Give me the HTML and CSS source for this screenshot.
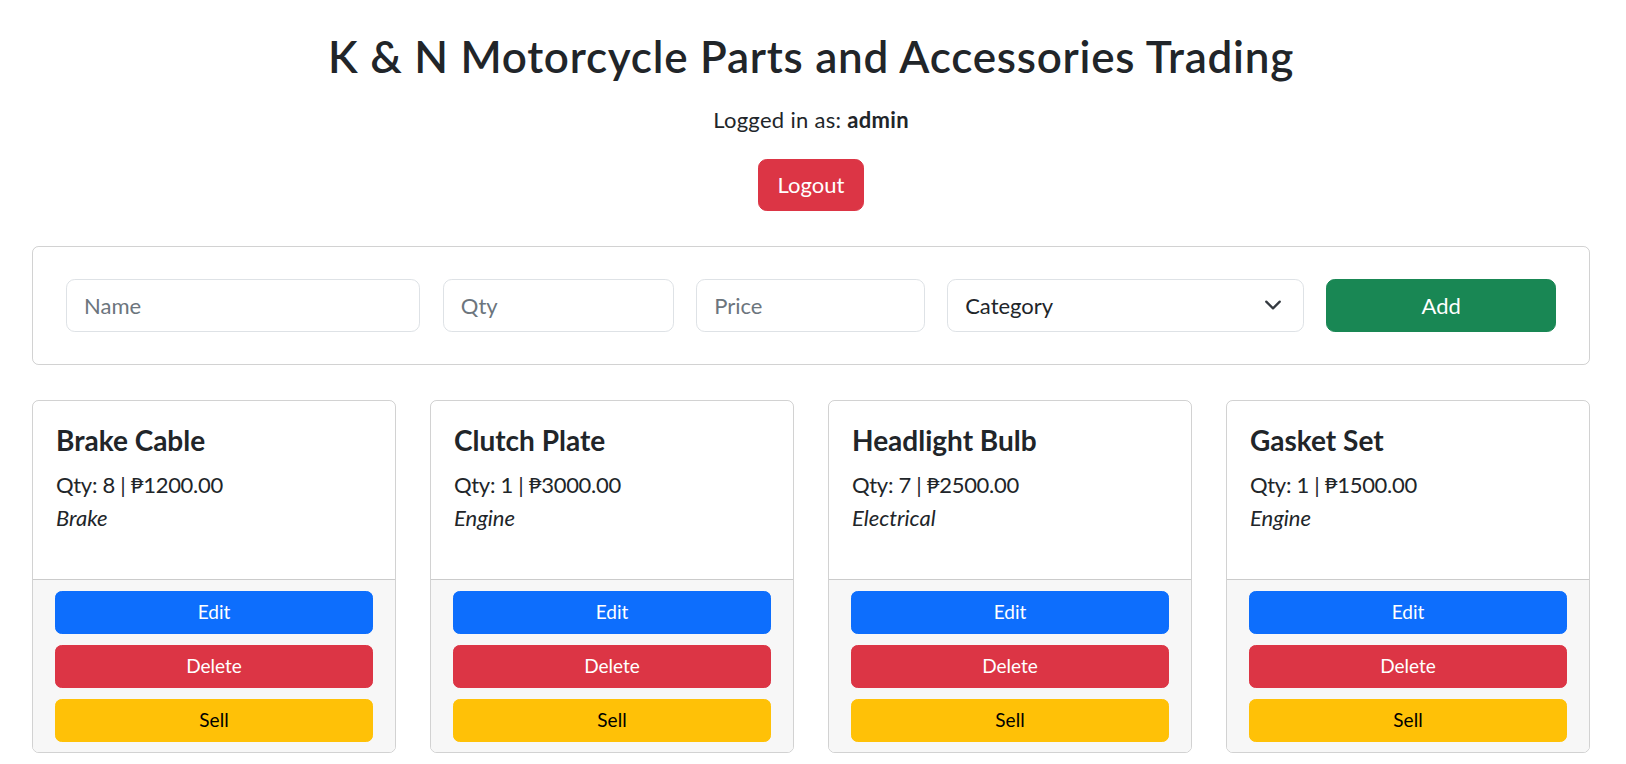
FILE: index.html
```html
<!DOCTYPE html>
<html lang="en">
<head>
<meta charset="utf-8">
<title>K &amp; N Motorcycle Parts and Accessories Trading</title>
<link rel="stylesheet" href="styles.css">
</head>
<body>
<div class="page">
  <header class="head">
    <h1 class="title">K &amp; N Motorcycle Parts and Accessories Trading</h1>
    <p class="user">Logged in as: <strong>admin</strong></p>
    <button class="btn btn-lg btn-danger">Logout</button>
  </header>

  <section class="form-card">
    <div class="form-row">
      <input class="field" type="text" placeholder="Name">
      <input class="field" type="text" placeholder="Qty">
      <input class="field" type="text" placeholder="Price">
      <div class="field select">
        <span>Category</span>
        <svg class="chev" viewBox="0 0 16 16" width="18" height="18"><path d="m2 5 6 6 6-6" fill="none" stroke="#343a40" stroke-width="2" stroke-linecap="round" stroke-linejoin="round"/></svg>
      </div>
      <button class="btn btn-lg btn-success">Add</button>
    </div>
  </section>

  <section class="items">
    <article class="item">
      <div class="item-body">
        <h4 class="item-title">Brake Cable</h4>
        <p class="item-text">Qty: 8 | ₱1200.00<br><em>Brake</em></p>
      </div>
      <div class="item-foot">
        <button class="btn btn-primary">Edit</button>
        <button class="btn btn-danger">Delete</button>
        <button class="btn btn-warning">Sell</button>
      </div>
    </article>
    <article class="item">
      <div class="item-body">
        <h4 class="item-title">Clutch Plate</h4>
        <p class="item-text">Qty: 1 | ₱3000.00<br><em>Engine</em></p>
      </div>
      <div class="item-foot">
        <button class="btn btn-primary">Edit</button>
        <button class="btn btn-danger">Delete</button>
        <button class="btn btn-warning">Sell</button>
      </div>
    </article>
    <article class="item">
      <div class="item-body">
        <h4 class="item-title">Headlight Bulb</h4>
        <p class="item-text">Qty: 7 | ₱2500.00<br><em>Electrical</em></p>
      </div>
      <div class="item-foot">
        <button class="btn btn-primary">Edit</button>
        <button class="btn btn-danger">Delete</button>
        <button class="btn btn-warning">Sell</button>
      </div>
    </article>
    <article class="item">
      <div class="item-body">
        <h4 class="item-title">Gasket Set</h4>
        <p class="item-text">Qty: 1 | ₱1500.00<br><em>Engine</em></p>
      </div>
      <div class="item-foot">
        <button class="btn btn-primary">Edit</button>
        <button class="btn btn-danger">Delete</button>
        <button class="btn btn-warning">Sell</button>
      </div>
    </article>
  </section>
</div>
</body>
</html>
```
FILE: styles.css
```css
* { box-sizing: border-box; }
html, body { margin: 0; padding: 0; background: #fff; }
body {
  font-family: Lato, "Open Sans", "Noto Sans", sans-serif;
  font-size: 17.6px;
  line-height: 1.5;
  color: #212529;
}
.page { padding: 30px 36px 0 32px; }

.head { text-align: center; display: flex; flex-direction: column; align-items: center; }
.title {
  margin: 0 0 20px;
  font-size: 44px;
  font-weight: 600;
  line-height: 1.2;
  letter-spacing: 0.75px;
}
.user { margin: 0 0 23px; font-size: 22px; line-height: 33px; letter-spacing: 0.3px; }
.user strong { font-weight: 700; }

.btn {
  font-family: inherit;
  border: 1px solid transparent;
  border-radius: 6.6px;
  font-size: 19px;
  line-height: 1.5;
  height: 42.7px;
  color: #fff;
  cursor: pointer;
  padding: 0 13px;
}
.btn-lg { font-size: 22px; height: 52px; border-radius: 8.8px; padding: 0 17px; }
.head .btn-lg { width: 106px; }
.btn-danger { background: #dc3545; border-color: #dc3545; }
.btn-success { background: #198754; border-color: #198754; }
.btn-primary { background: #0d6efd; border-color: #0d6efd; }
.btn-warning { background: #ffc107; border-color: #ffc107; color: #000; }

.form-card {
  margin-top: 35px;
  border: 1px solid rgba(0,0,0,0.175);
  border-radius: 6.6px;
  padding: 32px 33px 32px 33px;
}
.form-row {
  display: grid;
  grid-template-columns: 3.07fr 2fr 1.98fr 3.09fr 1.99fr;
  column-gap: 22.5px;
}
.field {
  font-family: inherit;
  height: 53px;
  border: 1px solid #dee2e6;
  border-radius: 8.8px;
  padding: 0 17px;
  font-size: 22px;
  color: #212529;
  background: #fff;
  min-width: 0;
  outline: none;
}
.field::placeholder { color: #6c757d; }
.select { display: flex; align-items: center; justify-content: space-between; padding-right: 21px; }
.chev { display: block; }
.form-row .btn-lg { height: 53px; }

.items {
  margin-top: 35px;
  display: grid;
  grid-template-columns: repeat(4, 1fr);
  column-gap: 34px;
}
.item {
  border: 1px solid rgba(0,0,0,0.175);
  border-radius: 6.6px;
  overflow: hidden;
  display: flex;
  flex-direction: column;
}
.item-body { padding: 23px 23px 22px; }
.item-title {
  margin: 0 0 11px;
  font-size: 28px;
  font-weight: 700;
  line-height: 1.2;
}
.item-text { margin: 0 0 23px; font-size: 22px; line-height: 33px; letter-spacing: -0.3px; }
.item-text em { font-style: italic; letter-spacing: 0; }
.item-foot {
  background: #f7f7f7;
  border-top: 1px solid rgba(0,0,0,0.175);
  padding: 11px 22px 10px;
  display: flex;
  flex-direction: column;
  gap: 11.3px;
}
.item-foot .btn { width: 100%; }
```
